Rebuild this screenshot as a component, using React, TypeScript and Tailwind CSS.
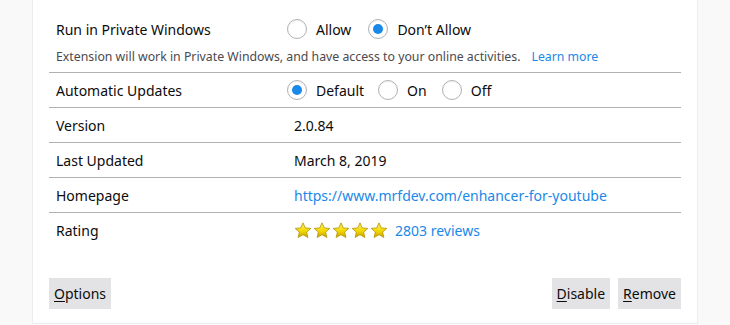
import React from "react";

const font = { fontFamily: '"Noto Sans", "Open Sans", sans-serif' };

function Radio({ checked }: { checked?: boolean }) {
  return (
    <span className="inline-flex h-[20px] w-[20px] items-center justify-center rounded-full border border-[#b1b1b3] bg-white shadow-[inset_0_1px_1px_rgba(0,0,0,0.06)]">
      {checked && <span className="h-[10px] w-[10px] rounded-full bg-[#1a88e8]" />}
    </span>
  );
}

function Star({ i }: { i: number }) {
  const id = `sg${i}`;
  return (
    <svg width="18" height="17" viewBox="0 0 24 23">
      <defs>
        <linearGradient id={id} x1="0" y1="0" x2="0" y2="1">
          <stop offset="0" stopColor="#fff36a" />
          <stop offset="0.55" stopColor="#f3d800" />
          <stop offset="1" stopColor="#c9a400" />
        </linearGradient>
      </defs>
      <path
        d="M12 1.2 L15.1 8 L22.6 8.7 L16.9 13.6 L18.6 21 L12 17.1 L5.4 21 L7.1 13.6 L1.4 8.7 L8.9 8 Z"
        fill={`url(#${id})`}
        stroke="#b89a10"
        strokeWidth="1.2"
        strokeLinejoin="round"
      />
    </svg>
  );
}

function Row({ label, children, last }: { label: string; children: React.ReactNode; last?: boolean }) {
  return (
    <div className={`flex h-[35px] items-center ${last ? "" : "border-b border-[#b1b1b3]"}`}>
      <div className="w-[238px] pl-[7px]">{label}</div>
      <div className="flex items-center">{children}</div>
    </div>
  );
}

export default function App() {
  return (
    <div className="h-[325px] w-[730px] overflow-hidden bg-[#f9f9fa]" style={font}>
      <div className="ml-[32px] w-[666px] border-x border-b border-[#ededf0] bg-white px-[16px] pb-[14px] pt-[12px] text-[14px] text-[#0c0c0d]">
        <div className="border-b border-[#b1b1b3]">
          <div className="flex h-[34px] items-center">
            <div className="w-[238px] pl-[7px]">Run in Private Windows</div>
            <div className="flex items-center">
              <Radio />
              <span className="ml-[9px] mr-[17px]">Allow</span>
              <Radio checked />
              <span className="ml-[9px]">Don’t Allow</span>
            </div>
          </div>
          <div className="mt-[1px] flex h-[20px] items-center pl-[7px] text-[12.3px] text-[#4a4a4f]">
            <span>Extension will work in Private Windows, and have access to your online activities.</span>
            <span className="ml-[11px] text-[#1a88e8]">Learn more</span>
          </div>
          <div className="h-[5px]" />
        </div>
        <Row label="Automatic Updates">
          <Radio checked />
          <span className="ml-[9px] mr-[14px]">Default</span>
          <Radio />
          <span className="ml-[9px] mr-[15px]">On</span>
          <Radio />
          <span className="ml-[9px]">Off</span>
        </Row>
        <Row label="Version">
          <span className="pl-[7px]">2.0.84</span>
        </Row>
        <Row label="Last Updated">
          <span className="pl-[7px]">March 8, 2019</span>
        </Row>
        <Row label="Homepage">
          <span className="pl-[7px] text-[#1a88e8]">https://www.mrfdev.com/enhancer-for-youtube</span>
        </Row>
        <Row label="Rating" last>
          <span className="flex items-center gap-[1px] pl-[7px]">
            {[0, 1, 2, 3, 4].map((i) => (
              <Star key={i} i={i} />
            ))}
          </span>
          <span className="ml-[7px] text-[#1a88e8]">2803 reviews</span>
        </Row>
        <div className="mt-[30px] flex items-center">
          <button className="h-[31px] bg-[#e3e3e5] px-[5px] text-[14px] text-[#0c0c0d]" style={font}>
            <span className="underline underline-offset-2">O</span>ptions
          </button>
          <div className="flex-1" />
          <button className="h-[31px] bg-[#e3e3e5] px-[5px] text-[14px] text-[#0c0c0d]" style={font}>
            <span className="underline underline-offset-2">D</span>isable
          </button>
          <button className="ml-[8px] h-[31px] bg-[#e3e3e5] px-[5px] text-[14px] text-[#0c0c0d]" style={font}>
            <span className="underline underline-offset-2">R</span>emove
          </button>
        </div>
      </div>
    </div>
  );
}
